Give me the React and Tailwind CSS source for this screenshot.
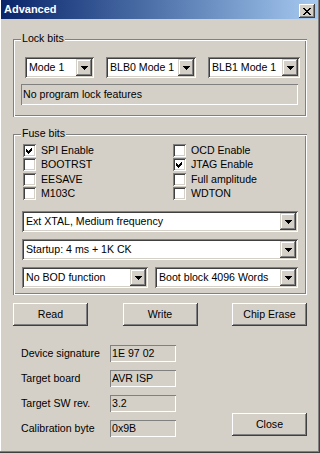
import React from "react";

const FONT = "font-['Liberation_Sans',Arial,sans-serif]";

function Arrow() {
  return (
    <svg width="7" height="4" viewBox="0 0 7 4" shapeRendering="crispEdges">
      <polygon points="0,0 7,0 3.5,4" fill="#000" />
    </svg>
  );
}

function Combo({ className, text }) {
  return (
    <div
      className={`${className} h-[21px] bg-white p-[2px] flex shadow-[inset_1px_1px_#808080,inset_-1px_-1px_#ffffff,inset_2px_2px_#404040,inset_-2px_-2px_#D4D0C8]`}
    >
      <div className="flex-1 min-w-0 flex items-center pl-[2px] leading-[13px] whitespace-nowrap">
        {text}
      </div>
      <div className="w-[16px] h-[17px] shrink-0 bg-[#D4D0C8] flex items-center justify-center shadow-[inset_-1px_-1px_#404040,inset_1px_1px_#D4D0C8,inset_-2px_-2px_#808080,inset_2px_2px_#ffffff]">
        <Arrow />
      </div>
    </div>
  );
}

function Check({ checked, label }) {
  return (
    <div className="h-[14.5px] flex items-center">
      <div className="w-[13px] h-[13px] bg-white shrink-0 shadow-[inset_1px_1px_#808080,inset_-1px_-1px_#ffffff,inset_2px_2px_#404040,inset_-2px_-2px_#D4D0C8]">
        {checked && (
          <svg width="13" height="13" viewBox="0 0 13 13" shapeRendering="crispEdges">
            <polygon points="3,5 5,7 9,3 9,6 5,10 3,8" fill="#000" />
          </svg>
        )}
      </div>
      <span className="ml-[5px] leading-[13px] whitespace-nowrap">{label}</span>
    </div>
  );
}

function Button({ children }) {
  return (
    <div className="w-[75px] h-[23px] flex items-center justify-center leading-[13px] shadow-[inset_-1px_-1px_#404040,inset_1px_1px_#ffffff,inset_-2px_-2px_#808080,inset_2px_2px_#D4D0C8]">
      {children}
    </div>
  );
}

function Group({ label, className, children }) {
  return (
    <div
      className={`relative w-[294px] ${className} shadow-[inset_1px_1px_#808080,inset_-1px_-1px_#ffffff,inset_2px_2px_#ffffff,inset_-2px_-2px_#808080]`}
    >
      <span className="absolute left-[8px] -top-[7px] px-[1px] bg-[#D4D0C8] leading-[13px]">
        {label}
      </span>
      {children}
    </div>
  );
}

function Field({ className, text }) {
  return (
    <div
      className={`${className} flex items-center pl-[2px] leading-[13px] whitespace-nowrap bg-[#D4D0C8] shadow-[inset_1px_1px_#808080,inset_-1px_-1px_#ffffff]`}
    >
      {text}
    </div>
  );
}

export default function App() {
  return (
    <div
      className={`${FONT} text-[10.6px] text-black w-[320px] h-[453px] bg-[#D4D0C8] flex flex-col pl-[1px] pr-[2px] pb-[2px] shadow-[inset_-1px_-1px_#404040,inset_-2px_-2px_#808080,inset_1px_0_#ffffff]`}
    >
      {/* Title bar */}
      <div className="h-[19px] bg-linear-to-r from-[#0A246A] to-[#A6CAF0] flex items-start justify-between pl-[3px] pr-[3px]">
        <span className="text-white font-bold text-[11px] leading-[19px]">Advanced</span>
        <div className="mt-[4px] w-[16px] h-[14px] bg-[#D4D0C8] flex items-center justify-center shadow-[inset_-1px_-1px_#404040,inset_1px_1px_#ffffff,inset_-2px_-2px_#808080,inset_2px_2px_#D4D0C8]">
          <svg width="8" height="7" viewBox="0 0 8 7" shapeRendering="crispEdges">
            <path d="M0 0 L2 0 L4 2.5 L6 0 L8 0 L5 3.5 L8 7 L6 7 L4 4.5 L2 7 L0 7 L3 3.5 Z" fill="#000" />
          </svg>
        </div>
      </div>

      {/* Content */}
      <div className="pl-[12px] flex flex-col">
        <Group label="Lock bits" className="mt-[20px] h-[78px] pt-[18px]">
          <div className="flex gap-[12px] pl-[12px]">
            <Combo className="w-[69px]" text="Mode 1" />
            <Combo className="w-[90px]" text="BLB0 Mode 1" />
            <Combo className="w-[92px]" text="BLB1 Mode 1" />
          </div>
          <Field className="mt-[6px] ml-[8px] w-[277px] h-[21px]" text="No program lock features" />
        </Group>

        <Group label="Fuse bits" className="mt-[17px] h-[161px] pt-[9px]">
          <div className="flex pl-[10px]">
            <div className="w-[150px] flex flex-col">
              <Check checked label="SPI Enable" />
              <Check label="BOOTRST" />
              <Check label="EESAVE" />
              <Check label="M103C" />
            </div>
            <div className="flex flex-col">
              <Check label="OCD Enable" />
              <Check checked label="JTAG Enable" />
              <Check label="Full amplitude" />
              <Check label="WDTON" />
            </div>
          </div>
          <div className="flex flex-col gap-[7px] pl-[9px] mt-[10px]">
            <Combo className="w-[276px]" text="Ext XTAL, Medium frequency" />
            <Combo className="w-[276px]" text="Startup: 4 ms + 1K CK" />
            <div className="flex gap-[7px]">
              <Combo className="w-[126px]" text="No BOD function" />
              <Combo className="w-[143px]" text="Boot block 4096 Words" />
            </div>
          </div>
        </Group>

        <div className="mt-[8px] w-[294px] flex justify-between">
          <Button>Read</Button>
          <Button>Write</Button>
          <Button>Chip Erase</Button>
        </div>

        <div className="mt-[19px] w-[294px] flex items-end justify-between">
          <div className="flex flex-col gap-[8px] pl-[8px]">
            {[
              ["Device signature", "1E 97 02"],
              ["Target board", "AVR ISP"],
              ["Target SW rev.", "3.2"],
              ["Calibration byte", "0x9B"],
            ].map(([l, v]) => (
              <div key={l} className="flex items-center h-[17px]">
                <span className="w-[89px] leading-[13px] whitespace-nowrap">{l}</span>
                <Field className="w-[66px] h-[17px]" text={v} />
              </div>
            ))}
          </div>
          <div className="mb-[1px]">
            <Button>Close</Button>
          </div>
        </div>
      </div>
    </div>
  );
}
